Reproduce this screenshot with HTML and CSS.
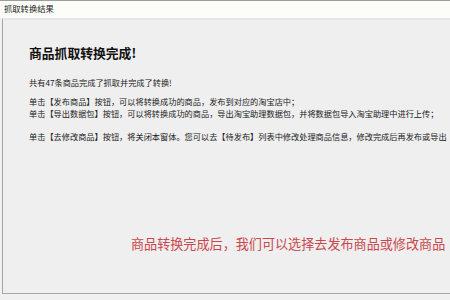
FILE: index.html
```html
<!DOCTYPE html>
<html lang="zh-CN">
<head>
<meta charset="utf-8">
<title>抓取转换结果</title>
<link rel="stylesheet" href="styles.css">
</head>
<body>
<div class="titlebar">抓取转换结果</div>
<div class="window">
  <div class="content">
    <h1 class="heading">商品抓取转换完成!</h1>
    <p class="line first">共有47条商品完成了抓取并完成了转换!</p>
    <p class="line gap">单击【发布商品】按钮，可以将转换成功的商品，发布到对应的淘宝店中；</p>
    <p class="line">单击【导出数据包】按钮，可以将转换成功的商品，导出淘宝助理数据包，并将数据包导入淘宝助理中进行上传；</p>
    <p class="line gap2">单击【去修改商品】按钮，将关闭本窗体。您可以去【待发布】列表中修改处理商品信息，修改完成后再发布或导出</p>
    <p class="note">商品转换完成后，我们可以选择去发布商品或修改商品</p>
  </div>
</div>
</body>
</html>
```
FILE: styles.css
```css
html, body {
  margin: 0;
  padding: 0;
}
body {
  width: 450px;
  height: 300px;
  overflow: hidden;
  background: #f0f0f0;
  font-family: "Noto Sans CJK SC", "Noto Sans", sans-serif;
  color: #1a1a1a;
}
.titlebar {
  height: 17px;
  border-top: 1px solid #9c9e9a;
  background: #fcfdf9;
  font-size: 8.3px;
  line-height: 15px;
  padding-left: 4px;
  color: #222;
  white-space: nowrap;
}
.window {
  margin-left: 2px;
  height: 273px;
  border-top: 2px solid #e6e6e6;
  border-left: 1px solid #a3a3a3;
  border-bottom: 1px solid #a8a8a8;
  background: #efefef;
  overflow: hidden;
}
.content {
  padding: 25px 0 0 26px;
  white-space: nowrap;
}
.heading {
  margin: 0;
  font-size: 12.8px;
  line-height: 16px;
  font-weight: bold;
  color: #111;
}
.line {
  margin: 0;
  font-size: 8.2px;
  line-height: 11.5px;
  color: #222;
}
.first {
  margin-top: 16px;
}
.gap {
  margin-top: 7.5px;
}
.gap2 {
  margin-top: 12px;
}
.note {
  margin: 93px 0 0 102px;
  font-size: 13.1px;
  line-height: 16px;
  color: #c9474d;
}
```
